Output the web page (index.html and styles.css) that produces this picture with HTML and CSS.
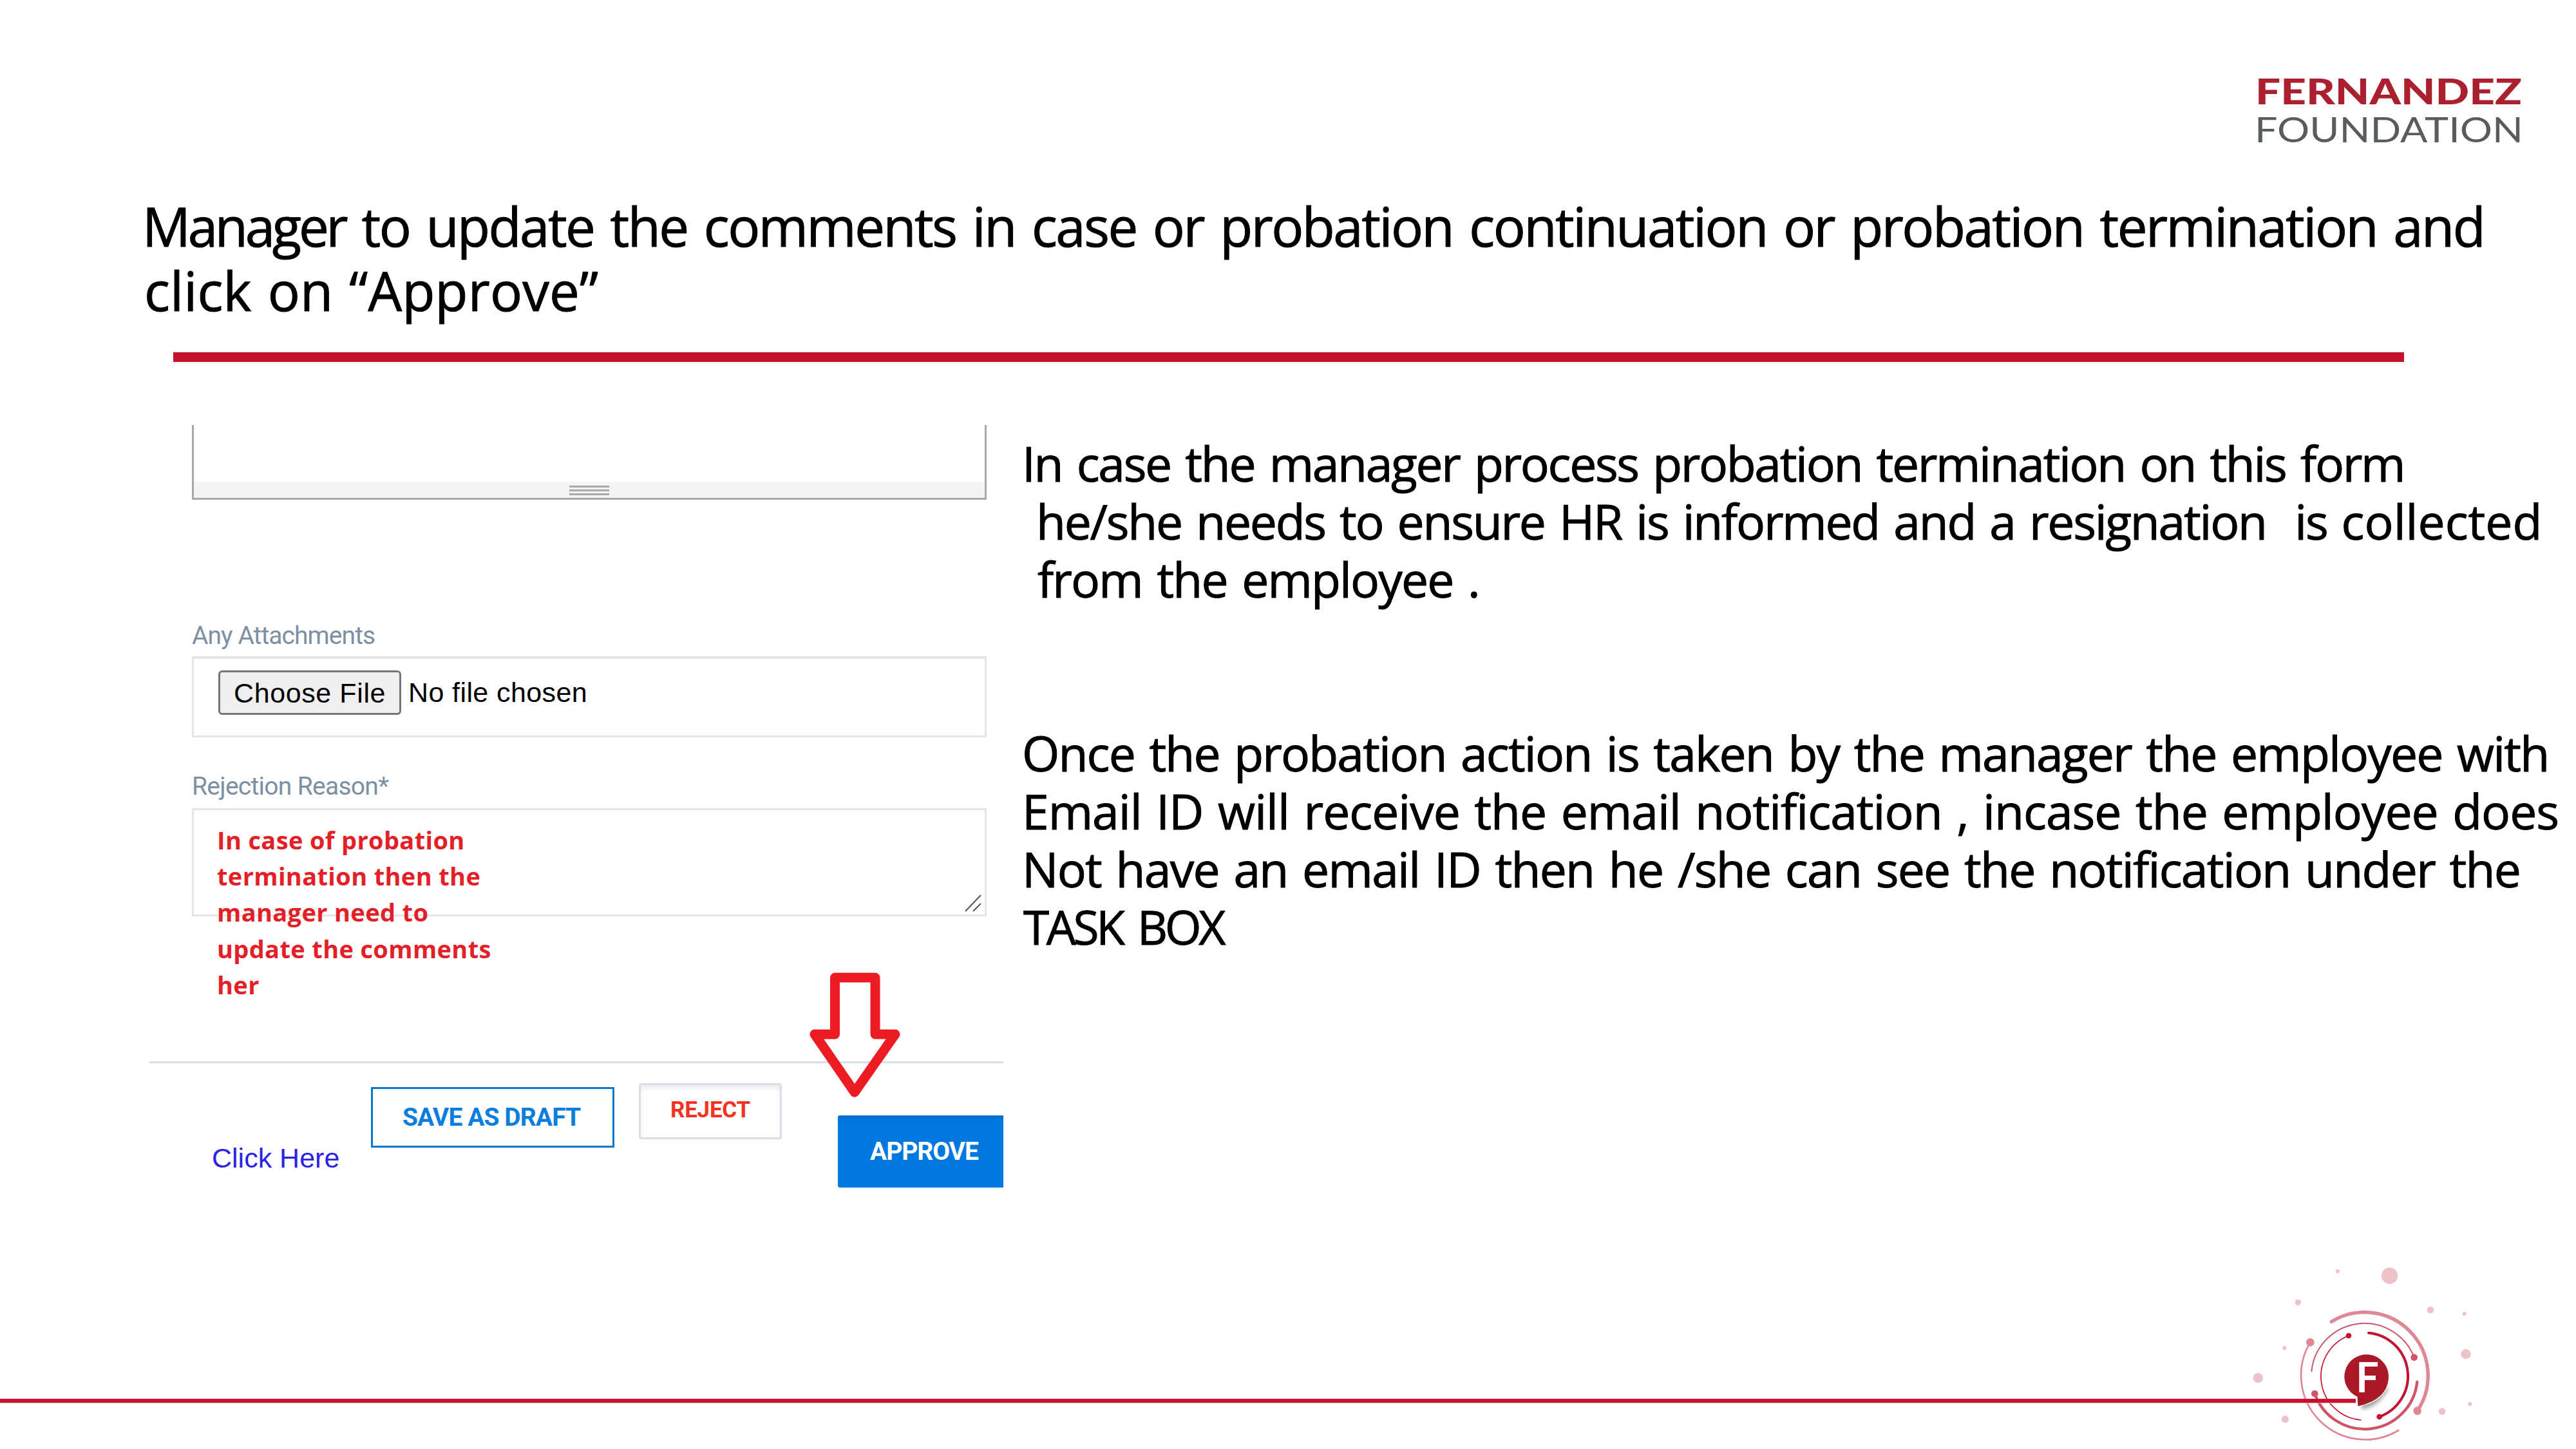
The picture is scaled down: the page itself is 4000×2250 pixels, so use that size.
FILE: index.html
```html
<!DOCTYPE html>
<html lang="en">
<head>
<meta charset="utf-8">
<title>Probation approval</title>
<link rel="stylesheet" href="styles.css">
</head>
<body>
<div class="slide">
  <header class="brand">
    <svg class="brand-logo" width="440" height="130" viewBox="0 0 440 130">
      <text class="brand-top" x="0" y="50" textLength="414" lengthAdjust="spacingAndGlyphs">FERNANDEZ</text>
      <text class="brand-bottom" x="-1" y="109" textLength="417" lengthAdjust="spacingAndGlyphs">FOUNDATION</text>
    </svg>
  </header>

  <h1 class="title">
    <span class="title-line title-long"><span class="title-lead">Manager</span> to update the comments in case or probation continuation or probation termination and</span>
    <span class="title-line title-short">click on “Approve”</span>
  </h1>
  <div class="title-rule"></div>

  <main class="content">
    <section class="form">
      <div class="editor"><div class="editor-bar"><div class="grip"></div></div></div>

      <label class="label attach-label">Any Attachments</label>
      <div class="file-box">
        <span class="file-button">Choose File</span>
        <span class="file-name">No file chosen</span>
      </div>

      <label class="label reason-label">Rejection Reason*</label>
      <div class="reason-box">
        <div class="reason-text">
          <div>In case of probation</div>
          <div>termination then the</div>
          <div>manager need to</div>
          <div>update the comments</div>
          <div>her</div>
        </div>
        <svg class="resizer" width="26" height="27" viewBox="0 0 26 27"><path d="M1 26L25 1M13 26L25 14"/></svg>
      </div>

      <div class="actions">
        <span class="link">Click Here</span>
        <span class="button save">SAVE AS DRAFT</span>
        <span class="button reject">REJECT</span>
        <span class="button approve">APPROVE</span>
      </div>

      <svg class="arrow" width="150" height="204" viewBox="0 0 150 204">
        <path d="M44.500 16H107V104H138L75 194L13 104H44.500Z"/>
      </svg>
    </section>

    <section class="notes">
      <p class="note">
        <span class="line n1">In case the manager process probation termination on this form</span>
        <span class="line n2">he/she needs to ensure HR is informed and a resignation&nbsp; is <span class="n2-end">collected</span></span>
        <span class="line n3">from the employee .</span>
      </p>
      <p class="note">
        <span class="line n4">Once the probation action is taken by the manager the employee with</span>
        <span class="line n5">Email ID will receive the email notification , incase the employee does</span>
        <span class="line n6">Not have an email ID then he /she can see the notification under the</span>
        <span class="line n7">TASK BOX</span>
      </p>
    </section>
  </main>

  <footer class="footer">
    <div class="footer-rule"></div>
    <svg class="emblem" width="420" height="310" viewBox="0 0 1260 930">
      <defs><filter id="shade" x="-30%" y="-30%" width="160%" height="160%"><feGaussianBlur stdDeviation="10"/></filter></defs>
      <g fill="#efc1c9">
        <circle cx="510" cy="102" r="9"/><circle cx="752" cy="123" r="38"/>
        <circle cx="325" cy="247" r="14"/><circle cx="942" cy="282" r="16"/>
        <circle cx="1100" cy="300" r="9"/><circle cx="262" cy="460" r="9"/>
        <circle cx="1107" cy="488" r="23"/><circle cx="139" cy="599" r="23"/>
        <circle cx="265" cy="791" r="17"/><circle cx="996" cy="755" r="16"/>
        <circle cx="1126" cy="720" r="9"/>
      </g>
      <g fill="none" stroke-linecap="round">
        <g stroke="#df8794">
          <path stroke-width="16" d="M481 337A295 295 0 0 1 881 752"/>
          <path stroke-width="8" d="M382 433A299 299 0 0 0 793 843"/>
        </g>
        <g stroke="#cf5468">
          <path stroke-width="6" d="M388 568A248 248 0 0 1 866 503"/>
          <path stroke-width="13" d="M880 617A246 246 0 0 1 403 672"/>
        </g>
        <g stroke="#c4122f">
          <path stroke-width="5" d="M561 402A204 204 0 0 0 618 795"/>
          <path stroke-width="12" d="M654 389A202 202 0 0 1 704 780"/>
        </g>
      </g>
      <g fill="#df8794"><circle cx="382" cy="433" r="19"/><circle cx="881" cy="752" r="19"/></g>
      <g fill="#cf5468"><circle cx="866" cy="503" r="16"/><circle cx="403" cy="672" r="16"/></g>
      <g fill="#c4122f"><circle cx="561" cy="402" r="13"/><circle cx="704" cy="780" r="13"/></g>
      <rect x="0" y="714" width="594" height="3" fill="#e9a3ae"/>
      <rect x="0" y="696" width="594" height="18" fill="#c4122f"/>
      <path filter="url(#shade)" fill="#000" opacity=".38" d="M620 745Q700 735 744 650L720 620L620 700Z"/>
      <path fill="#ab1929" stroke="#fff" stroke-width="4" d="M600 688Q600 712 603 733C690 715 749 670 749 591A105 105 0 1 0 600 688Z"/>
      <path fill="#8e1220" opacity=".55" d="M603 693Q655 714 705 692Q668 708 622 706Q606 702 603 693Z"/>
      <text class="emblem-letter" x="595" y="666" textLength="107" lengthAdjust="spacingAndGlyphs">F</text>
    </svg>
  </footer>
</div>
</body>
</html>
```
FILE: styles.css
```css
* { box-sizing: border-box; }
body { margin: 0; background: #fff; }

.slide {
  display: flex;
  flex-direction: column;
  width: 4000px;
  height: 2250px;
  overflow: hidden;
  background: #fff;
  color: #000;
  font-family: "Trebuchet MS", "Open Sans", sans-serif;
}

/* Brand */
.brand { display: flex; justify-content: flex-end; height: 301px; padding: 112px 58px 0 0; }
.brand-logo { display: block; overflow: visible; }
.brand-top { font: 900 55px Lato, sans-serif; fill: #ab1f2f; }
.brand-bottom { font: 400 54px Lato, sans-serif; fill: #585c5e; }

/* Title */
.title { margin: 0; padding-left: 221px; height: 246px; font-size: 83.33px; font-weight: 400; line-height: 100px; -webkit-text-stroke: 1px #000; }
.title-line { display: block; white-space: nowrap; }
.title-long { letter-spacing: -2.49px; word-spacing: 5.98px; }
.title-lead { letter-spacing: -4.2px; }
.title-short { padding-left: 3px; letter-spacing: .178px; word-spacing: 3.24px; }
.title-rule { width: 3464px; height: 15px; margin-left: 269px; background: #c4122a; border-top: 1px solid #b02038; }

/* Content */
.content { display: flex; gap: 29px; height: 1286px; padding: 98px 0 0 232px; }

.form { position: relative; display: flex; flex-direction: column; width: 1326px; height: 1188px; }
.form > * { flex: none; }
.editor {
  display: flex; flex-direction: column; justify-content: flex-end;
  width: 1234px; height: 116px; margin-left: 66px;
  border: solid #a9a9a9; border-width: 0 3px 3px;
}
.editor-bar { display: flex; justify-content: center; height: 25px; padding-top: 6px; background: #f4f4f4; }
.grip { width: 62px; height: 15px; border-top: 3px solid #a9a9a9; border-bottom: 3px solid #a9a9a9; background: linear-gradient(#a9a9a9, #a9a9a9) 0 3px / 100% 3px no-repeat; }

.label { display: block; height: 46px; margin-left: 66px; font: 39px/46px Roboto, sans-serif; color: #7d8fa1; white-space: nowrap; }
.attach-label { margin-top: 188px; letter-spacing: -.931px; }
.reason-label { margin-top: 53px; letter-spacing: -.72px; }

.file-box {
  display: flex; align-items: flex-start; gap: 11px;
  width: 1234px; height: 126px; margin: 9px 0 0 66px; padding: 18px 0 0 38px;
  border: 3px solid #e5e5e5; border-top-width: 4px;
  font: 43px/69px "Liberation Sans", Arial, sans-serif;
  white-space: nowrap;
}
.file-button {
  width: 284px; height: 69px; padding-left: 21px;
  border: 3px solid #767676; border-radius: 6px; background: #efefef;
  line-height: 64px; letter-spacing: .6px;
}
.file-name { letter-spacing: .4px; }

.reason-box {
  display: flex; justify-content: space-between;
  width: 1234px; height: 168px; margin: 11px 0 0 66px; padding-left: 36px;
  border: 3px solid #e5e5e5;
}
.reason-text { margin-top: 18px; font: bold 38px/56.2px "Open Sans", sans-serif; color: #e41f28; letter-spacing: .35px; white-space: nowrap; }
.resizer { align-self: flex-end; margin: 0 5px 4px 0; }
.resizer path { fill: none; stroke: #555; stroke-width: 2; }

.actions { display: flex; align-items: flex-start; height: 200px; margin-top: 225px; border-top: 3px solid #d8dfe6; white-space: nowrap; }
.link { width: 247px; margin: 122px 0 0 97px; font: 43px/50px "Liberation Sans", Arial, sans-serif; letter-spacing: 0; color: #2a22e6; }
.button { display: block; font-family: Roboto, sans-serif; font-weight: 700; }
.save { width: 378px; height: 94px; margin-top: 37px; padding-left: 46px; border: 3px solid #0b78d0; font-size: 39px; line-height: 88px; letter-spacing: -.919px; color: #0a7ddd; }
.reject { width: 222px; height: 87px; margin: 31px 0 0 38px; padding-left: 46px; border: 3px solid #d9dfe5; border-radius: 4px; box-shadow: inset 0 5px 7px #ececec; font-size: 35px; line-height: 77px; letter-spacing: -.25px; color: #f3321f; }
.approve { width: 257px; height: 112px; margin: 81px 0 0 87px; padding-left: 50px; border-radius: 3px 0 0 3px; background: linear-gradient(#0070d2, #0078e0 12px); font-size: 39px; line-height: 112px; letter-spacing: -1.068px; color: #fff; }

.arrow { position: absolute; left: 1020px; top: 842px; }
.arrow path { fill: none; stroke: #ed1c24; stroke-width: 15; stroke-linejoin: round; }

.notes { padding-top: 14px; font-size: 75px; line-height: 90px; -webkit-text-stroke: 1px #000; }
.note { margin: 0 0 180px; }
.line { display: block; white-space: nowrap; }
.n1 { letter-spacing: -2.357px; word-spacing: 5.43px; }
.n2 { padding-left: 22px; letter-spacing: -2.25px; word-spacing: 4.99px; }
.n2-end { letter-spacing: 0; }
.n3 { padding-left: 24px; letter-spacing: -1.882px; word-spacing: 4.96px; }
.n4 { letter-spacing: -1.86px; word-spacing: 4.91px; }
.n5 { letter-spacing: -1px; word-spacing: 4.04px; }
.n6 { letter-spacing: -1.74px; word-spacing: 4.77px; }
.n7 { padding-left: 2px; font-size: 73px; letter-spacing: -4.4px; word-spacing: 9px; }

/* Footer */
.footer { display: flex; height: 310px; margin-top: 92px; padding-right: 120px; }
.footer-rule { flex: 1; height: 7px; margin-top: 232px; background: #c4122f; border-bottom: 1px solid #e9a3ae; }
.emblem { display: block; }
.emblem-letter { font: 700 193px Lato, sans-serif; fill: #fff; }
```
